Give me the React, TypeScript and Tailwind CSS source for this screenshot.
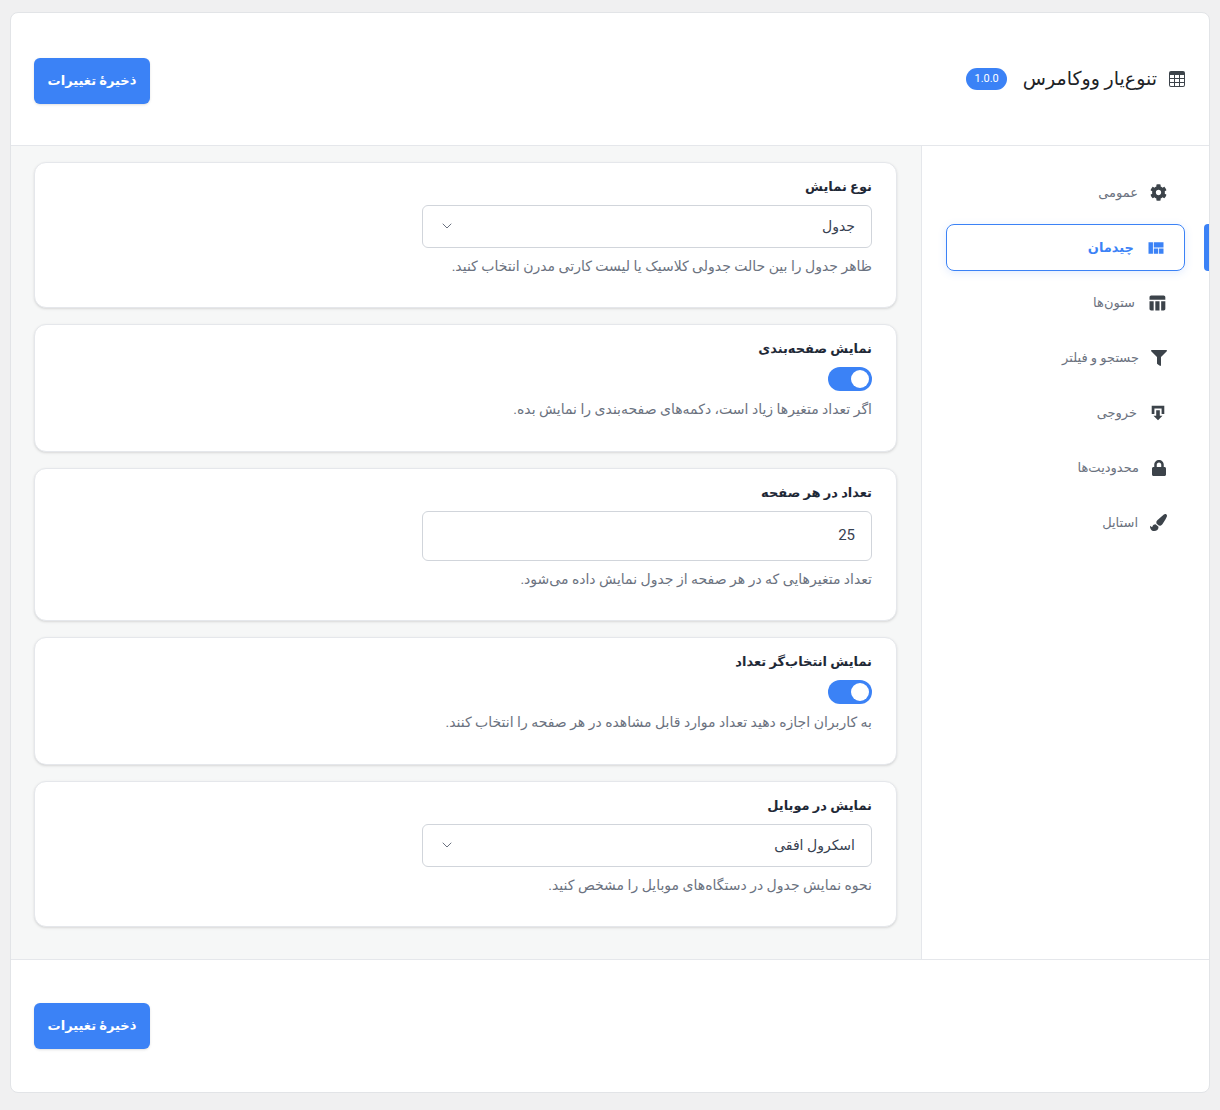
import { FaCog, FaFilter, FaLock, FaPaintBrush } from "react-icons/fa";
import { MdViewQuilt, MdTableChart } from "react-icons/md";
import { BsTable } from "react-icons/bs";
import { ChevronDown } from "lucide-react";

const font = { fontFamily: 'Roboto, "DejaVu Sans", "Noto Sans", sans-serif' };

function ExportIcon() {
  return (
    <svg viewBox="0 0 20 20" className="h-[18px] w-[18px]" fill="currentColor">
      <path d="M3 2h14v9h-3V5H6v6H3z" />
      <path d="M8 7h4v6h3l-5 5-5-5h3z" />
    </svg>
  );
}

const nav = [
  { label: "عمومی", icon: <FaCog className="h-[17px] w-[17px]" /> },
  { label: "چیدمان", icon: <MdViewQuilt className="h-5 w-5" />, active: true },
  { label: "ستون‌ها", icon: <MdTableChart className="h-5 w-5" /> },
  { label: "جستجو و فیلتر", icon: <FaFilter className="h-4 w-4" /> },
  { label: "خروجی", icon: <ExportIcon /> },
  { label: "محدودیت‌ها", icon: <FaLock className="h-4 w-4" /> },
  { label: "استایل", icon: <FaPaintBrush className="h-[17px] w-[17px]" /> },
];

function SaveButton() {
  return (
    <button className="h-[46px] w-[116px] rounded-md bg-[#3b82f6] text-[13px] font-semibold text-white shadow-sm">
      ذخیرهٔ تغییرات
    </button>
  );
}

function Toggle() {
  return (
    <div className="flex h-6 w-11 items-center justify-start rounded-full bg-[#3b82f6] px-[3px]">
      <div className="h-[18px] w-[18px] rounded-full bg-white" />
    </div>
  );
}

function Card({ title, help, children, h }: { title: string; help: string; children: React.ReactNode; h: string }) {
  return (
    <section className={`rounded-xl border border-[#e5e7eb] bg-white px-6 pt-[14px] shadow-sm ${h}`}>
      <p className="text-[13px] font-semibold text-[#1f2937]">{title}</p>
      <div className="mt-2 w-[450px]">{children}</div>
      <p className="mt-2 text-[14px] text-[#6b7280]">{help}</p>
    </section>
  );
}

function Select({ value, h }: { value: string; h: string }) {
  return (
    <div className={`flex ${h} items-center justify-between rounded-md border border-[#d1d5db] bg-white px-4 text-[14px] text-[#374151]`}>
      <span>{value}</span>
      <ChevronDown className="h-4 w-4 text-[#6b7280]" strokeWidth={1.5} />
    </div>
  );
}

export default function App() {
  return (
    <div dir="rtl" style={font} className="min-h-[1110px] bg-[#f0f0f1] px-[10px] pt-3">
      <div className="overflow-hidden rounded-lg border border-[#e2e4e7] bg-white">
        <header className="flex h-[133px] items-center justify-between border-b border-[#e5e7eb] pl-[23px] pr-[24px]">
          <div className="flex items-center gap-3">
            <BsTable className="h-4 w-4 text-[#3c434a]" />
            <h1 className="text-[19px] font-medium text-[#1d2327]">تنوع‌یار ووکامرس</h1>
            <span className="mr-1 rounded-full bg-[#3b82f6] px-2 py-[3px] text-[11px] text-white">1.0.0</span>
          </div>
          <div className="pt-[4px]">
            <SaveButton />
          </div>
        </header>
        <div className="flex">
          <aside className="w-[288px] border-l border-[#e5e7eb] bg-white pt-[23px]">
            <nav className="flex flex-col gap-[8px]">
              {nav.map((n) => (
                <div key={n.label} className="relative h-[47px] pl-6 pr-[24px]">
                  <div
                    className={`flex h-full items-center gap-3 rounded-lg px-[18px] text-[13px] ${
                      n.active ? "border border-[#3b82f6] font-semibold text-[#3b82f6] shadow-[0_2px_8px_rgba(59,130,246,0.15)]" : "text-[#6b7280]"
                    }`}
                  >
                    <span className={n.active ? "text-[#3b82f6]" : "text-[#3c434a]"}>{n.icon}</span>
                    {n.label}
                  </div>
                  {n.active && <div className="absolute right-0 top-0 h-full w-[5px] rounded-l bg-[#3b82f6]" />}
                </div>
              ))}
            </nav>
          </aside>
          <main className="flex flex-1 flex-col gap-4 bg-[#f6f7f7] pb-8 pl-[23px] pr-6 pt-4">
            <Card title="نوع نمایش" help="ظاهر جدول را بین حالت جدولی کلاسیک یا لیست کارتی مدرن انتخاب کنید." h="h-[146px]">
              <Select value="جدول" h="h-[43px]" />
            </Card>
            <Card title="نمایش صفحه‌بندی" help="اگر تعداد متغیرها زیاد است، دکمه‌های صفحه‌بندی را نمایش بده." h="h-[128px]">
              <Toggle />
            </Card>
            <Card title="تعداد در هر صفحه" help="تعداد متغیرهایی که در هر صفحه از جدول نمایش داده می‌شود." h="h-[153px]">
              <div className="flex h-[50px] items-center rounded-md border border-[#d1d5db] px-4 text-[15px] text-[#374151]">25</div>
            </Card>
            <Card title="نمایش انتخاب‌گر تعداد" help="به کاربران اجازه دهید تعداد موارد قابل مشاهده در هر صفحه را انتخاب کنند." h="h-[128px]">
              <Toggle />
            </Card>
            <Card title="نمایش در موبایل" help="نحوه نمایش جدول در دستگاه‌های موبایل را مشخص کنید." h="h-[146px]">
              <Select value="اسکرول افقی" h="h-[43px]" />
            </Card>
          </main>
        </div>
        <footer className="flex h-[133px] items-center justify-end border-t border-[#e5e7eb] pl-[23px]">
          <SaveButton />
        </footer>
      </div>
    </div>
  );
}
